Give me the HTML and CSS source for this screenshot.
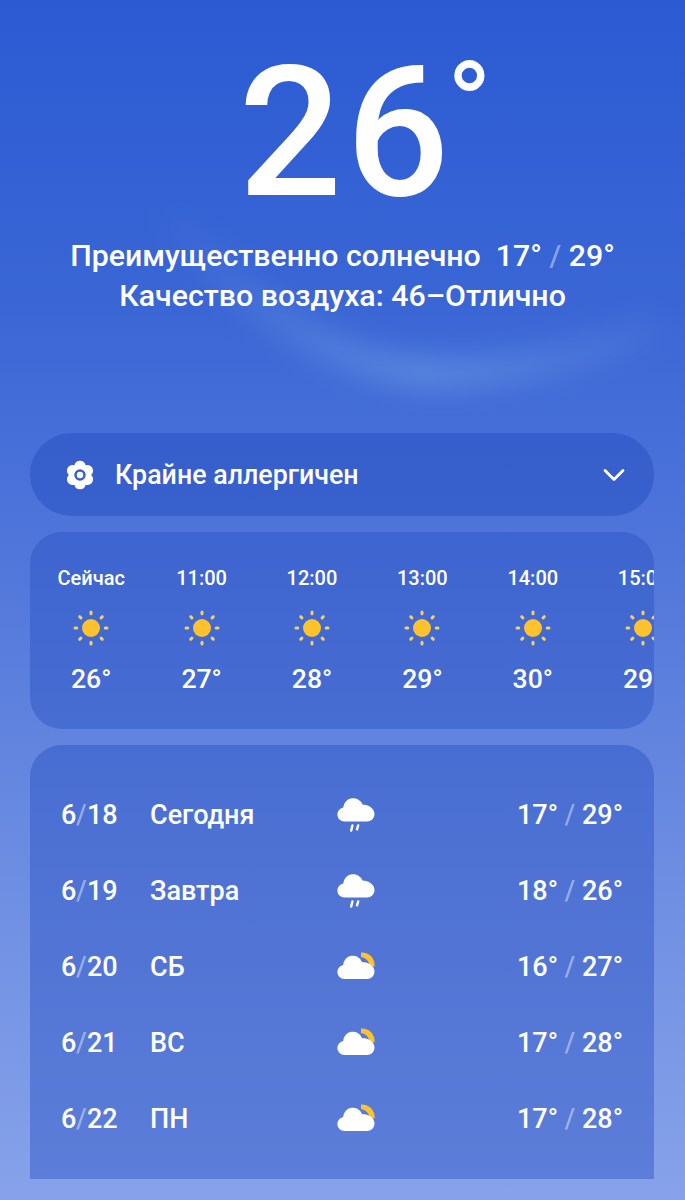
FILE: index.html
```html
<!DOCTYPE html>
<html lang="ru">
<head>
  <meta charset="UTF-8">
  <meta name="viewport" content="width=device-width, initial-scale=1.0">
  <title>Погода</title>
  <link rel="stylesheet" href="styles.css">
</head>
<body>
  <!-- мягкая светлая дуга на фоне -->
  <svg class="streak" viewBox="0 0 685 440" width="685" height="440">
    <defs>
      <linearGradient id="arc" gradientUnits="userSpaceOnUse" x1="150" y1="0" x2="700" y2="0">
        <stop offset="0" stop-color="#7fb2ea" stop-opacity="0"/>
        <stop offset="0.5" stop-color="#7fb2ea" stop-opacity="0.42"/>
        <stop offset="1" stop-color="#7fb2ea" stop-opacity="0"/>
      </linearGradient>
      <filter id="soft" x="-20%" y="-50%" width="140%" height="200%">
        <feGaussianBlur stdDeviation="14"/>
      </filter>
    </defs>
    <path d="M166 210C230 295 330 368 425 373C520 377 600 352 660 325" fill="none" stroke="url(#arc)" stroke-width="30" filter="url(#soft)"/>
  </svg>

  <svg class="defs" width="0" height="0">
    <defs>
      <symbol id="sun" viewBox="0 0 36 36">
        <circle cx="18" cy="18" r="9" fill="#fdc22c"/>
        <g stroke="#f5d062" stroke-width="3" stroke-linecap="round">
          <path d="M18 2v1.800M18 32.200v1.800M2 18h1.800M32.200 18h1.800M6.700 6.700l1.200 1.200M28.100 28.100l1.200 1.200M6.700 29.300l1.200-1.200M28.100 7.900l1.200-1.200"/>
        </g>
      </symbol>
      <symbol id="rain" viewBox="0 0 38 38">
        <path d="M7.500 25.500a7 7 0 0 1-1.300-13.900A10 10 0 0 1 25.500 8.500C30 8.500 37.500 11.500 37.500 18C37.500 22.500 34 25.500 30 25.500z" fill="#fff"/>
        <path d="M15.400 29.500l-1.200 5M21.200 29.500l-1.200 3.800" stroke="#fff" stroke-width="2.400" stroke-linecap="round" fill="none"/>
      </symbol>
      <symbol id="cloudy" viewBox="0 0 38 38">
        <path d="M24 4.500A12.500 12.500 0 0 1 37.500 18.500L33 18Q31 10 24 9z" fill="#fdc22c"/>
        <path d="M7.500 31a7 7 0 0 1-1.300-13.900A9.700 9.700 0 0 1 25 14C30 14 37.500 17 37.500 23.500C37.500 28 34 31 30 31z" fill="#fff"/>
      </symbol>
    </defs>
  </svg>

  <header class="hero">
    <div class="temp-big">26<span class="deg">°</span></div>
    <p class="cond">Преимущественно солнечно&nbsp; 17° <i>/</i> 29°</p>
    <p class="cond">Качество воздуха: 46–Отлично</p>
  </header>

  <div class="pill">
    <svg class="flower" viewBox="0 0 28 28" width="32" height="32">
      <path fill-rule="evenodd" fill="#fff" d="M14 1.500a5 5 0 0 1 4.900 4 5 5 0 0 1 5.400 1.600 5 5 0 0 1-.5 6.900 5 5 0 0 1 .5 6.900 5 5 0 0 1-5.400 1.600 5 5 0 0 1-9.800 0 5 5 0 0 1-5.400-1.600 5 5 0 0 1 .5-6.900 5 5 0 0 1-.5-6.900 5 5 0 0 1 5.400-1.600A5 5 0 0 1 14 1.500zM14 9a5 5 0 1 0 0 10 5 5 0 0 0 0-10zM14 11.200a2.800 2.800 0 1 1 0 5.600 2.800 2.800 0 0 1 0-5.600z"/>
    </svg>
    <span class="pill-text">Крайне аллергичен</span>
    <svg class="chev" viewBox="0 0 24 16" width="24" height="16">
      <path d="M3 3.500l9 9 9-9" fill="none" stroke="#fff" stroke-width="2.800" stroke-linecap="round" stroke-linejoin="round"/>
    </svg>
  </div>

  <section class="hours">
    <div class="hour"><span class="h-time">Сейчас</span><svg class="h-icon"><use href="#sun"/></svg><span class="h-temp">26°</span></div>
    <div class="hour"><span class="h-time">11:00</span><svg class="h-icon"><use href="#sun"/></svg><span class="h-temp">27°</span></div>
    <div class="hour"><span class="h-time">12:00</span><svg class="h-icon"><use href="#sun"/></svg><span class="h-temp">28°</span></div>
    <div class="hour"><span class="h-time">13:00</span><svg class="h-icon"><use href="#sun"/></svg><span class="h-temp">29°</span></div>
    <div class="hour"><span class="h-time">14:00</span><svg class="h-icon"><use href="#sun"/></svg><span class="h-temp">30°</span></div>
    <div class="hour"><span class="h-time">15:00</span><svg class="h-icon"><use href="#sun"/></svg><span class="h-temp">29°</span></div>
  </section>

  <section class="days">
    <div class="day"><span class="d-date">6<i>/</i>18</span><span class="d-name">Сегодня</span><svg class="d-icon"><use href="#rain"/></svg><span class="d-temp">17° <i>/</i> 29°</span></div>
    <div class="day"><span class="d-date">6<i>/</i>19</span><span class="d-name">Завтра</span><svg class="d-icon"><use href="#rain"/></svg><span class="d-temp">18° <i>/</i> 26°</span></div>
    <div class="day"><span class="d-date">6<i>/</i>20</span><span class="d-name">СБ</span><svg class="d-icon"><use href="#cloudy"/></svg><span class="d-temp">16° <i>/</i> 27°</span></div>
    <div class="day"><span class="d-date">6<i>/</i>21</span><span class="d-name">ВС</span><svg class="d-icon"><use href="#cloudy"/></svg><span class="d-temp">17° <i>/</i> 28°</span></div>
    <div class="day"><span class="d-date">6<i>/</i>22</span><span class="d-name">ПН</span><svg class="d-icon"><use href="#cloudy"/></svg><span class="d-temp">17° <i>/</i> 28°</span></div>
  </section>
</body>
</html>
```

FILE: styles.css
```css
html, body { margin: 0; height: 1200px; overflow: hidden; }
body {
  color: #fff;
  font-family: Roboto, "Noto Sans", sans-serif;
  background: linear-gradient(180deg, #2b5ad3 0%, #3a66d5 25%, #4f75da 45%, #6a8be1 70%, #87a2ea 100%);
}
.defs { position: absolute; }
.streak { position: absolute; top: 0; left: 0; z-index: -1; }
i { font-style: normal; opacity: 0.4; }

.hero { height: 433px; text-align: center; overflow: hidden; }
.temp-big {
  height: 236px;
  font-size: 182px;
  font-weight: 500;
  line-height: 266px;
  letter-spacing: 4px;
}
.temp-big .deg {
  display: inline-block;
  width: 0;
  font-size: 122px;
  font-weight: 400;
  line-height: 1;
  vertical-align: 46px;
  margin-left: -7px;
}
.cond {
  margin: 0;
  font-size: 30.300px;
  line-height: 40px;
  font-weight: 500;
}

.pill {
  display: flex;
  align-items: center;
  height: 83px;
  margin: 0 31px 16px 30px;
  padding: 0 28px 0 34px;
  border-radius: 42px;
  background: rgba(42, 82, 195, 0.55);
}
.flower { margin-right: 19px; }
.pill-text { flex: 1; font-size: 26.800px; font-weight: 500; }

.hours {
  display: flex;
  height: 197px;
  margin: 0 31px 16px 30px;
  border-radius: 32px;
  background: rgba(42, 82, 195, 0.45);
  overflow: hidden;
}
.hour {
  flex: 0 0 110.400px;
  display: flex;
  flex-direction: column;
  align-items: center;
  transform: translateX(6px);
}
.h-time { margin-top: 33px; font-size: 20px; line-height: 26px; font-weight: 500; }
.h-icon { width: 36px; height: 36px; margin-top: 19px; }
.h-temp { margin-top: 17px; font-size: 26.600px; line-height: 32px; font-weight: 500; }

.days {
  height: 402px;
  margin: 0 31px 0 30px;
  padding-top: 32px;
  border-radius: 32px 32px 0 0;
  background: rgba(42, 82, 195, 0.45);
}
.day {
  display: flex;
  align-items: center;
  height: 76px;
  padding: 0 31px;
  font-size: 27px;
  font-weight: 500;
}
.d-date { width: 89px; }
.d-name { width: 187px; }
.d-icon { width: 38px; height: 38px; }
.d-temp { margin-left: auto; }
```
